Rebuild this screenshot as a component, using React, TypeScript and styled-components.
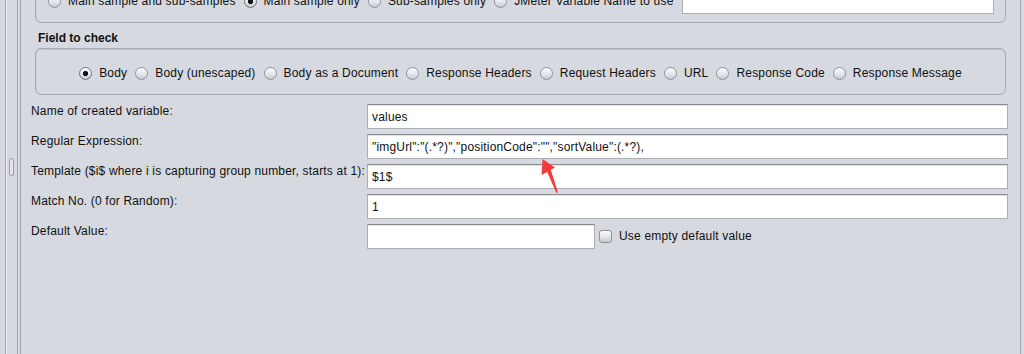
import styled, { createGlobalStyle } from "styled-components";

const GlobalStyle = createGlobalStyle`
  html, body {
    margin: 0;
    padding: 0;
    background: #d6d9df;
  }
  body {
    font-family: "Liberation Sans", Arial, sans-serif;
    font-size: 12px;
    letter-spacing: 0.18px;
    color: #111;
  }
`;

const applyOptions = [
  { label: "Main sample and sub-samples" },
  { label: "Main sample only", checked: true },
  { label: "Sub-samples only" },
  { label: "JMeter Variable Name to use" },
];

const fieldOptions = [
  "Body",
  "Body (unescaped)",
  "Body as a Document",
  "Response Headers",
  "Request Headers",
  "URL",
  "Response Code",
  "Response Message",
];

const rows = [
  { label: "Name of created variable:", value: "values" },
  {
    label: "Regular Expression:",
    value: '"imgUrl":"(.*?)","positionCode":"","sortValue":(.*?),',
    marked: true,
  },
  {
    label: "Template ($i$ where i is capturing group number, starts at 1):",
    value: "$1$",
  },
  { label: "Match No. (0 for Random):", value: "1" },
];

export default function App() {
  return (
    <>
      <GlobalStyle />
      <Screen>
        <Gutter>
          <GutterEdge />
          <Divider>
            <Handle />
          </Divider>
        </Gutter>

        <Panel>
          <PanelBody>
            <Groups>
              <Box $top>
                {applyOptions.map((o) => (
                  <Option key={o.label}>
                    <Radio $on={o.checked} />
                    {o.label}
                  </Option>
                ))}
                <Field $grow />
              </Box>

              <Heading>Field to check</Heading>
              <Box $center>
                {fieldOptions.map((label, i) => (
                  <Option key={label}>
                    <Radio $on={i === 0} />
                    {label}
                  </Option>
                ))}
              </Box>
            </Groups>

            <Form>
              {rows.map((r) => (
                <Row key={r.label}>
                  <Label>{r.label}</Label>
                  <FieldCell>
                    <Field>{r.value}</Field>
                    {r.marked && (
                      <ArrowMark width="24" height="40" viewBox="0 0 24 40">
                        <polygon
                          points="4.5,2 17,10.5 12.8,12.8 20,35.5 18.2,35.8 9.2,15 3.5,18"
                          fill="#f23d3d"
                        />
                      </ArrowMark>
                    )}
                  </FieldCell>
                </Row>
              ))}
              <Row>
                <Label>Default Value:</Label>
                <DefaultCell>
                  <Field $width={228} />
                  <Option>
                    <Check />
                    Use empty default value
                  </Option>
                </DefaultCell>
              </Row>
            </Form>
          </PanelBody>
        </Panel>
      </Screen>
    </>
  );
}

const Screen = styled.div`
  display: flex;
  width: 1024px;
  height: 354px;
  overflow: hidden;
`;

const Gutter = styled.div`
  display: flex;
  flex: none;
  width: 17px;
`;

const GutterEdge = styled.div`
  width: 5px;
`;

const Divider = styled.div`
  flex: 1;
  display: flex;
  justify-content: center;
  padding-top: 158px;
  border-left: 1px solid #a3a6ac;
  box-shadow: inset 1px 0 0 #e9ebee;
`;

const Handle = styled.div`
  width: 3px;
  height: 16px;
  border: 1px solid #9b9fa6;
  border-radius: 2px;
  background: #e2e4e8;
`;

const Panel = styled.div`
  flex: 1;
  display: flex;
  padding-left: 2px;
  margin-right: 3px;
  border-left: 1px solid #9ea2a9;
  border-right: 1px solid #9ea2a9;
`;

const PanelBody = styled.div`
  flex: 1;
  border-left: 1px solid #9ea2a9;
  padding: 0 12px 0 10px;
`;

const Groups = styled.div`
  margin: 0 2px 0 4px;
`;

const Box = styled.div<{ $top?: boolean; $center?: boolean }>`
  box-sizing: border-box;
  height: 47px;
  display: flex;
  align-items: center;
  justify-content: ${(p) => (p.$center ? "center" : "flex-start")};
  gap: 8px;
  margin-top: ${(p) => (p.$top ? "-24px" : "0")};
  padding: ${(p) => (p.$top ? "3px 11px 0 12px" : "3px 0 0")};
  border: 1px solid #a7aab0;
  border-radius: 6px;
  box-shadow: inset 0 1px 0 #c3c6cc, inset 1px 0 0 #cdd0d5;
`;

const Heading = styled.div`
  font-weight: bold;
  letter-spacing: 0;
  line-height: 15px;
  padding: 8px 3px 2px;
`;

const Option = styled.label`
  display: flex;
  align-items: center;
  gap: 7px;
  white-space: nowrap;
  line-height: 15px;
`;

const Radio = styled.span<{ $on?: boolean }>`
  flex: none;
  box-sizing: border-box;
  width: 13px;
  height: 13px;
  border-radius: 50%;
  border: 1px solid ${(p) => (p.$on ? "#6f747c" : "#8e9298")};
  background: ${(p) =>
      p.$on ? "radial-gradient(circle, #151515 0 2.4px, transparent 2.9px)," : ""}
    linear-gradient(#fdfdfe, #e3e6ea 55%, #c4c9d1);
`;

const Check = styled.span`
  flex: none;
  box-sizing: border-box;
  width: 13px;
  height: 13px;
  border-radius: 3px;
  border: 1px solid #8e9298;
  background: linear-gradient(#fdfdfe, #e3e6ea 55%, #c4c9d1);
`;

const Field = styled.div<{ $grow?: boolean; $width?: number }>`
  box-sizing: border-box;
  height: 25px;
  ${(p) => (p.$grow ? "flex: 1;" : "")}
  width: ${(p) => (p.$width ? `${p.$width}px` : "auto")};
  display: flex;
  align-items: center;
  padding: 0 4px;
  background: #fff;
  white-space: pre;
  border: 1px solid #abaeb3;
  border-top-color: #898c91;
  box-shadow: inset 0 1px 0 #e2e3e5;
`;

const Form = styled.div`
  display: grid;
  row-gap: 5px;
  margin-top: 9px;
`;

const Row = styled.div`
  display: grid;
  grid-template-columns: 336px 1fr;
`;

const Label = styled.div`
  line-height: 15px;
  white-space: nowrap;
`;

const FieldCell = styled.div`
  position: relative;
`;

const DefaultCell = styled.div`
  display: flex;
  align-items: center;
  gap: 4px;
`;

const ArrowMark = styled.svg`
  position: absolute;
  left: 171px;
  top: 23px;
  z-index: 2;
  pointer-events: none;
`;
